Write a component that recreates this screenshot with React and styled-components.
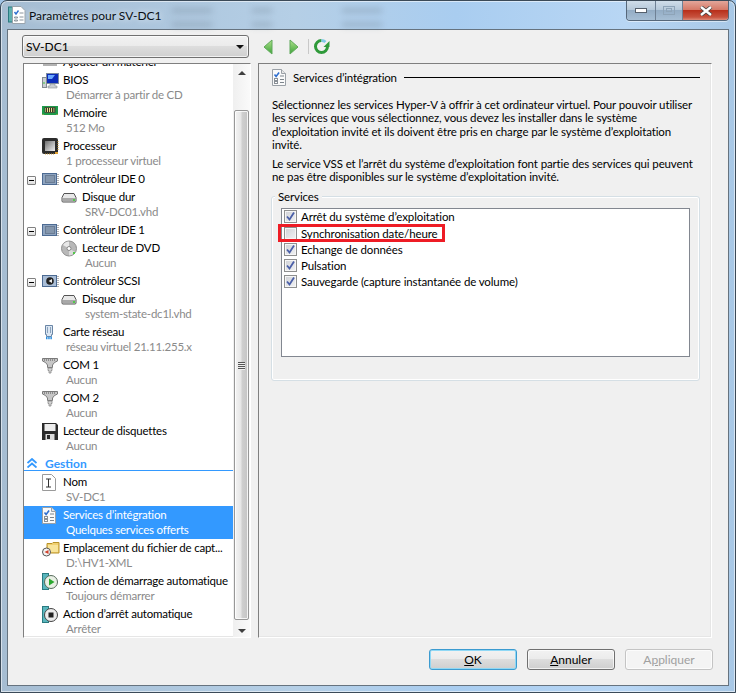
import React from 'react';
import styled, { createGlobalStyle, css } from 'styled-components';

const Global = createGlobalStyle`
  html, body { margin: 0; padding: 0; background: #9fc3e6; }
  * { box-sizing: border-box; }
  body { font-family: "Lato", "Noto Sans", sans-serif; font-size: 11.5px; letter-spacing: -0.12px; color: #000; }
`;

const Frame = styled.div`
  position: relative; width: 736px; height: 693px; overflow: hidden;
  display: flex; flex-direction: column;
  border: 1px solid #3b4a58; border-radius: 7px 7px 0 0;
  padding: 0 6px 6px 6px;
  background: linear-gradient(90deg, #a6bdd2 0%, #a9c2d9 12%, #b5cfe6 40%, #a9cdf0 62%, #b8d6f4 85%, #a8c8e6 100%);
  box-shadow: inset 0 0 0 1px rgba(255,255,255,.55);
`;
const TitleBar = styled.div`
  height: 28px; flex: none; display: flex; align-items: center; gap: 3px; padding-left: 1px;
  position: relative;
`;
const TitleText = styled.span`
  font-size: 12px; letter-spacing: 0; color: #0a0f14; text-shadow: 0 0 6px rgba(255,255,255,.9); position: relative;
`;
const Smudges = styled.div`
  position: absolute; left: 150px; top: 4px; width: 240px; height: 22px; filter: blur(3px); opacity: .45;
  background:
    linear-gradient(#7f93a6,#7f93a6) 15px 3px/40px 5px no-repeat,
    linear-gradient(#7f93a6,#7f93a6) 95px 3px/20px 5px no-repeat,
    linear-gradient(#7f93a6,#7f93a6) 185px 3px/40px 5px no-repeat,
    linear-gradient(#7f93a6,#7f93a6) 15px 17px/40px 5px no-repeat,
    linear-gradient(#7f93a6,#7f93a6) 95px 17px/20px 5px no-repeat,
    linear-gradient(#7f93a6,#7f93a6) 185px 17px/40px 5px no-repeat;
`;
const Caption = styled.div`
  position: absolute; right: 0; top: 0; height: 20px; display: flex;
  border: 1px solid #56677a; border-top: none; border-radius: 0 0 4px 4px; overflow: hidden;
  box-shadow: 0 1px 0 rgba(255,255,255,.5);
`;
const CapBtn = styled.div`
  width: ${p => p.$w}px; display: flex; align-items: center; justify-content: center;
  background: ${p => p.$close
    ? 'linear-gradient(#e3a69a 0%, #d67a68 45%, #b8301c 50%, #c8533f 85%, #dc8a78 100%)'
    : 'linear-gradient(#cfdde9 0%, #b6c9da 45%, #94adc5 50%, #a6bed4 100%)'};
  & + & { border-left: 1px solid #6f8195; }
`;

const Client = styled.div`
  flex: 1; display: flex; flex-direction: column; background: #f0f0f0;
  border: 1px solid #66737f; padding: 5px 16px 0 14px; min-height: 0;
`;
const ToolRow = styled.div`
  display: flex; align-items: center; height: 23px; flex: none;
`;
const Combo = styled.div`
  width: 227px; height: 23px; display: flex; align-items: center; justify-content: space-between;
  font-size: 12px; letter-spacing: 0;
  border: 1px solid #707070; border-radius: 3px; padding: 0 4px 0 3px; margin-right: 14px;
  background: linear-gradient(#f2f2f2 0%, #ebebeb 48%, #dddddd 50%, #cfcfcf 100%);
  box-shadow: inset 0 0 0 1px rgba(255,255,255,.7);
`;
const ArrowDown = styled.span`
  width: 0; height: 0; border-left: 4px solid transparent; border-right: 4px solid transparent; border-top: 4px solid #111;
`;
const NavBtn = styled.span`
  display: inline-flex; width: 26px; margin-right: ${p => p.$mr || 0}px;
`;
const Sep = styled.span` width: 1px; height: 15px; background: #c8c8c8; margin-right: 4px; `;

const Panels = styled.div`
  height: 575px; flex: none; display: flex; margin-top: 5px; gap: 7px;
`;
const etched = css`
  border-style: solid; border-width: 1px;
  border-color: #7f7f7f #ffffff #ffffff #7f7f7f;
  box-shadow: inset -1px -1px 0 #e6e6e6;
`;
const LeftPanel = styled.div`
  ${etched}
  width: 228px; flex: none; display: flex; background: #fff; overflow: hidden; margin-left: 1px;
`;
const TreeList = styled.div`
  flex: 1; min-width: 0; overflow: hidden; letter-spacing: -0.22px;
`;
const Tree = styled.div` margin-top: -11px; `;
const Row = styled.div`
  position: relative;
  display: grid; grid-template-columns: ${p => p.$nest ? 37 : 18}px 17px 1fr;
  height: ${p => p.$single ? 18 : 33}px;
  grid-auto-rows: 15px; padding-top: 1px;
  background: ${p => p.$sel ? '#3399ff' : 'transparent'};
  color: ${p => p.$sel ? '#fff' : '#000'};
`;
const IconCell = styled.span`
  grid-column: 2; grid-row: 1 / span 2; display: block; height: 18px;
`;
const ExpandCell = styled.span`
  grid-column: 1; grid-row: 1; display: flex; align-items: center; padding-left: 3px; height: 16px;
`;
const Plus = styled.span`
  position: relative; width: 9px; height: 9px; display: block; border: 1px solid #808080; border-radius: 1px; margin-top: 2px;
  background: linear-gradient(#fff, #dcdcdc);
  &::after { content: ''; position: absolute; left: 1px; right: 1px; top: 3px; height: 1px; background: #000; }
`;
const Title = styled.div`
  grid-column: 3; grid-row: 1; padding-left: 4px; line-height: 15px; white-space: nowrap;
`;
const Sub = styled.div`
  grid-column: 3; grid-row: 2; padding-left: 7px; line-height: 15px; white-space: nowrap;
  color: ${p => p.$sel ? '#fff' : '#8a8a8a'};
`;
const SectionRow = styled.div`
  height: 18px; display: flex; align-items: center; gap: 8px; padding-left: 3px; position: relative;
  color: #3399ff; font-weight: 700; font-size: 12px; letter-spacing: 0; border-bottom: 2px solid #fff;
  &::after { content: ''; position: absolute; left: 0; right: 0; bottom: 0; height: 1px; background: #3399ff; }
`;

const ScrollBar = styled.div`
  width: 17px; flex: none; display: flex; flex-direction: column; background: linear-gradient(90deg, #f0f0f0, #fafafa);
  border-left: 1px solid #f0f0f0;
`;
const ScrollArrow = styled.div`
  height: 17px; flex: none; display: flex; align-items: center; justify-content: center; margin-top: ${p => p.$top || 0}px;
`;
const ArrowUp = styled.span`
  width: 0; height: 0; border-left: 4px solid transparent; border-right: 4px solid transparent; border-bottom: 4px solid #3f3f3f;
`;
const ArrowDn = styled(ArrowUp)`
  border-bottom: none; border-top: 4px solid #3f3f3f;
`;
const Thumb = styled.div`
  height: 510px; flex: none; margin: 29px 1px 0 0; display: flex; flex-direction: column; align-items: center; justify-content: center; gap: 1px;
  border: 1px solid #979797; border-radius: 2px;
  background: linear-gradient(90deg, #f4f4f4 0%, #e6e6e6 45%, #cfcfcf 55%, #c4c4c4 100%);
  box-shadow: inset 0 0 0 1px rgba(255,255,255,.8);
`;
const Grip = styled.span` width: 7px; height: 1px; background: #555; box-shadow: 0 1px 0 #eee; `;

const RightPanel = styled.div`
  ${etched}
  flex: 1; min-width: 0; padding: 5px 11px 0 13px;
`;
const Heading = styled.div`
  display: flex; align-items: center; height: 17px; letter-spacing: -0.2px;
`;
const HeadingText = styled.span` margin-left: 7px; margin-right: 7px; white-space: nowrap; `;
const Rule = styled.span` flex: 1; height: 1px; background: #000; `;
const Para = styled.p`
  margin: ${p => p.$mt}px 0 0 0; line-height: 13.3px; white-space: nowrap;
`;
const GroupBox = styled.div`
  position: relative; margin: 12px 0 0 -1px; height: 185px; width: 429px;
  border: 1px solid #d5dfe5; border-radius: 3px; padding: 11px 9px 0;
  box-shadow: inset 0 0 0 1px #fff;
`;
const GroupLabel = styled.span`
  position: absolute; left: 3px; top: -9px; padding: 0 3px; background: #f0f0f0; line-height: 17px;
`;
const ListBox = styled.div`
  height: 149px; background: #fff; border: 1px solid #828790;
`;
const ServiceRow = styled.div`
  position: relative; display: flex; align-items: center; height: 16.2px; padding-left: 2px; gap: 4px;
`;
const Box = styled.span`
  width: 13px; height: 13px; flex: none; display: flex; align-items: center; justify-content: center;
  border: 1px solid #8e8f8f;
  background: linear-gradient(135deg, #cfd1d6, #f2f3f5);
  box-shadow: inset 0 0 0 1px #f6f6f6;
`;
const Highlight = styled.span`
  position: absolute; left: -4px; top: -1px; width: 167px; height: 18px; border: 3px solid #ee1c25; pointer-events: none;
`;

const Footer = styled.div`
  flex: 1; display: flex; justify-content: flex-end; align-items: flex-start; padding-top: 11px; gap: 10px; margin-right: -1px;
`;
const Btn = styled.div`
  width: 88px; height: 21px; display: flex; align-items: center; justify-content: center; font-size: 12px; letter-spacing: 0;
  border: 1px solid ${p => p.$disabled ? '#c4c4c4' : p.$def ? '#3c9bd0' : '#707070'}; border-radius: 3px;
  color: ${p => p.$disabled ? '#a0a0a0' : '#000'};
  background: ${p => p.$disabled ? '#f4f4f4' : 'linear-gradient(#f2f2f2 0%, #ebebeb 48%, #dddddd 50%, #cfcfcf 100%)'};
  box-shadow: inset 0 0 0 1px ${p => p.$def ? '#8fd8f5' : 'rgba(255,255,255,.7)'};
  u { text-underline-offset: 1px; }
`;

const IC = ({ children, w = 17, h = 18 }) => <svg width={w} height={h} viewBox={`0 0 ${w} ${h}`} style={{ display: 'block' }}>{children}</svg>;

const AppIcon = () => <svg width="18" height="20" viewBox="0 0 18 20" style={{ display: 'block' }}>
  <rect x="0.5" y="2" width="4" height="15" fill="#5fb0b0" stroke="#2a7a80" />
  <path d="M4.5 1.5H13L17 5.5V18.5H4.5Z" fill="#fff" stroke="#9aa4ac" />
  <path d="M6.5 7l1.5 2 2.5-3.5" stroke="#2f6fd0" strokeWidth="1.4" fill="none" />
  <path d="M11.5 8h4M11.5 12h4M11.5 15h4M6.5 12h3v1h-3zM6.5 15h3v1h-3z" stroke="#8a949c" fill="none" />
</svg>;

const ServicesIcon = () => <svg width="14" height="17" viewBox="0 0 14 17" style={{ display: 'block' }}>
  <path d="M.5.5H9.5L13.5 4.5V16.5H.5Z" fill="#fafafa" stroke="#9aa0a6" />
  <path d="M9.5.5V4.5H13.5" fill="#e6e6e6" stroke="#9aa0a6" />
  <path d="M2.5 5.5l1.6 2 3-4" stroke="#2f6fd0" strokeWidth="1.6" fill="none" />
  <path d="M8 7h4M8 10.5h4M8 13.5h4" stroke="#7d858c" />
  <rect x="2.5" y="9.5" width="3" height="2" fill="#fff" stroke="#8a9096" />
  <rect x="2.5" y="12.5" width="3" height="2" fill="#fff" stroke="#8a9096" />
</svg>;

const Icons = {
  add: <IC><path d="M3 9h10M5 6h6v3H5zM1 11h14" stroke="#666" fill="#aaa" /></IC>,
  bios: <IC w={18}>
    <rect x="4.5" y="1.5" width="12" height="10" fill="#0b2bb8" stroke="#7b8aa0" />
    <path d="M6 3h7l-3 4H6z" fill="#6aa7ff" />
    <rect x="0.5" y="5.5" width="4" height="10" fill="#c9ced2" stroke="#838a90" />
    <rect x="1.5" y="10" width="1" height="2" fill="#42c542" />
    <path d="M8 12h5v2h2v2H6v-2h2z" fill="#c9ced2" stroke="#8a9096" strokeWidth=".6" />
  </IC>,
  mem: <IC w={17}>
    <rect x="0" y="1" width="16" height="9" fill="#1f9a4a" />
    <rect x="3" y="2.5" width="10" height="5" fill="#eadf8a" stroke="#33402c" strokeWidth=".8" />
    <path d="M4.5 3v4M6.5 3v4M8.5 3v4M10.5 3v4M12 3v4" stroke="#1d1d1d" strokeWidth=".9" />
    <path d="M1 10v-1M15 10v-1" stroke="#d6b44a" />
  </IC>,
  cpu: <IC>
    <rect x="0" y="0" width="16" height="16" rx="2" fill="#2c2c2c" />
    <rect x="3" y="3" width="10" height="10" fill="url(#cpug)" />
    <defs><linearGradient id="cpug" x1="0" y1="0" x2="1" y2="1"><stop offset="0" stopColor="#6f6f6f" /><stop offset="1" stopColor="#f0f0f0" /></linearGradient></defs>
    <rect x="13" y="14" width="3" height="2" fill="#e0a030" />
    <path d="M16 3v10" stroke="#c99a3a" strokeDasharray="1 1" />
    <path d="M3 16h10" stroke="#c99a3a" strokeDasharray="1 1" />
  </IC>,
  ctrl: <IC>
    <rect x=".5" y="2.5" width="14" height="11" fill="#8ea4c0" stroke="#4c6a92" />
    <rect x="3.500" y="4.500" width="9" height="7" fill="#8496ac" stroke="#6a7c94" />
    <path d="M16 3v11" stroke="#666" strokeDasharray="1 1" />
  </IC>,
  scsi: <IC>
    <rect x=".5" y="2.5" width="14" height="11" fill="#a9bdd6" stroke="#4c6a92" />
    <circle cx="8" cy="8" r="3.8" fill="#222" />
    <path d="M10 6L6.6 8 10 10z" fill="#eee" />
    <path d="M16 3v11" stroke="#666" strokeDasharray="1 1" />
  </IC>,
  disk: <IC>
    <path d="M3 4.5h10l2 4v3.5a1 1 0 0 1-1 1H2a1 1 0 0 1-1-1V8.500z" fill="#e8e8e8" stroke="#555" />
    <path d="M2 9h12v3H2z" fill="#a8a8a8" />
    <rect x="12" y="10" width="2" height="2" fill="#52c94a" />
  </IC>,
  dvd: <IC>
    <circle cx="8" cy="8.500" r="7.500" fill="#b8b8b8" stroke="#8f8f8f" />
    <path d="M8 8.500L2 5A7 7 0 0 1 8 1.500Z" fill="#e8e8e8" />
    <path d="M8 8.500L14 12A7 7 0 0 1 8 15.500Z" fill="#dcdcdc" />
    <circle cx="8" cy="8.500" r="2" fill="#fff" stroke="#888" />
    <rect x="12" y="12" width="2" height="2" fill="#52c94a" />
  </IC>,
  net: <IC>
    <path d="M3.500 1.500h7v9H9.500v2h-5v-2H3.500z" fill="#dbe6f2" stroke="#6a86a6" />
    <path d="M5.500 3v6M8.500 3v6" stroke="#8aa2bc" />
    <path d="M4 14h6" stroke="#2d8fe0" strokeWidth="2.500" strokeDasharray="1.500 .7" />
  </IC>,
  com: <IC>
    <path d="M.5 1.500h15v2.500l-3 1.500-2 2.500v2.500h-5V8l-2-2.500-3-1.500z" fill="#c6c6c6" stroke="#7a7a7a" />
    <path d="M2 3h12" stroke="#555" strokeDasharray="1 1" />
    <path d="M6 11h4v2.500H9v2.500H7v-2.500H6z" fill="#d4d4d4" stroke="#8a8a8a" strokeWidth=".8" />
  </IC>,
  floppy: <IC>
    <path d="M0 0h14l2 2v15H0z" fill="#2b2b2b" />
    <rect x="2.500" y="1" width="11" height="7" fill="#ededed" />
    <rect x="3.500" y="11" width="9" height="6" fill="#dcdcdc" />
    <rect x="5" y="12" width="3" height="4" fill="#2b2b2b" />
  </IC>,
  name: <IC w={15}>
    <path d="M.5 .5H9.500L13.500 4.500V16.500H.5Z" fill="#fff" stroke="#9a9a9a" />
    <path d="M4 5h5M4 13h5M6.500 5v8" stroke="#333" fill="none" />
  </IC>,
  services: <ServicesIcon />,
  folder: <IC w={18}>
    <path d="M5 3.500h5l1-1h6V13H5z" fill="#f0d070" stroke="#b8922a" />
    <path d="M6 5h10v7H6z" fill="#f8e49a" />
    <circle cx="4.500" cy="12" r="4" fill="#f4f4f4" stroke="#555" />
    <path d="M6.500 10L2.500 12l4 2z" fill="#d0402a" />
  </IC>,
  start: <IC>
    <rect x=".5" y=".5" width="6" height="16" fill="#59b6bd" stroke="#2a7a80" />
    <circle cx="9" cy="9" r="6.500" fill="#e8efe4" stroke="#566b5b" />
    <path d="M7 5.500L12.500 9 7 12.500z" fill="#2aa82f" />
  </IC>,
  stop: <IC>
    <rect x=".5" y=".5" width="6" height="16" fill="#59b6bd" stroke="#2a7a80" />
    <circle cx="9" cy="9" r="6.500" fill="#ececec" stroke="#444" />
    <rect x="6.500" y="6.500" width="5" height="5" fill="#222" />
  </IC>,
};

const Check = () => <svg width="11" height="11" viewBox="0 0 11 11" style={{ display: 'block' }}>
  <path d="M2 5.500l2.500 3 4.500-7" stroke="#4a5fa8" strokeWidth="1.800" fill="none" />
</svg>;

const NavArrow = ({ dir }) => <svg width="10" height="16" viewBox="0 0 10 16" style={{ display: 'block' }}>
  <defs><linearGradient id={`na${dir}`} x1="0" y1="0" x2="0" y2="1"><stop offset="0" stopColor="#aee28a" /><stop offset="1" stopColor="#3da33a" /></linearGradient></defs>
  <path d={dir === 'l' ? 'M9 1V15L1 8Z' : 'M1 1V15L9 8Z'} fill={`url(#na${dir})`} stroke="#5fa85a" />
</svg>;

const Refresh = () => <svg width="17" height="17" viewBox="0 0 17 17" style={{ display: 'block' }}>
  <path d="M8.500 2.500a6 6 0 1 0 6 6" fill="none" stroke="#2f9a3a" strokeWidth="3" />
  <path d="M8.500 2.500a6 6 0 0 1 4 1.500" fill="none" stroke="#7fc9e8" strokeWidth="3" />
  <path d="M16.500 3v6h-6z" fill="#2f9a3a" />
</svg>;

const items = [
  { t: 'Ajouter un matériel', i: 'add', single: true },
  { t: 'BIOS', s: 'Démarrer à partir de CD', i: 'bios' },
  { t: 'Mémoire', s: '512 Mo', i: 'mem' },
  { t: 'Processeur', s: '1 processeur virtuel', i: 'cpu' },
  { t: 'Contrôleur IDE 0', i: 'ctrl', single: true, exp: true },
  { t: 'Disque dur', s: 'SRV-DC01.vhd', i: 'disk', nest: true },
  { t: 'Contrôleur IDE 1', i: 'ctrl', single: true, exp: true },
  { t: 'Lecteur de DVD', s: 'Aucun', i: 'dvd', nest: true },
  { t: 'Contrôleur SCSI', i: 'scsi', single: true, exp: true },
  { t: 'Disque dur', s: 'system-state-dc1l.vhd', i: 'disk', nest: true },
  { t: 'Carte réseau', s: 'réseau virtuel 21.11.255.x', i: 'net' },
  { t: 'COM 1', s: 'Aucun', i: 'com' },
  { t: 'COM 2', s: 'Aucun', i: 'com' },
  { t: 'Lecteur de disquettes', s: 'Aucun', i: 'floppy' },
  { section: 'Gestion' },
  { t: 'Nom', s: 'SV-DC1', i: 'name' },
  { t: 'Services d’intégration', s: 'Quelques services offerts', i: 'services', sel: true },
  { t: 'Emplacement du fichier de capt...', s: 'D:\\HV1-XML', i: 'folder' },
  { t: 'Action de démarrage automatique', s: 'Toujours démarrer', i: 'start' },
  { t: 'Action d’arrêt automatique', s: 'Arrêter', i: 'stop' },
];

const services = [
  ['Arrêt du système d’exploitation', true],
  ['Synchronisation date/heure', false, true],
  ['Echange de données', true],
  ['Pulsation', true],
  ['Sauvegarde (capture instantanée de volume)', true],
];

const Chevrons = () => <svg width="10" height="10" viewBox="0 0 10 10" style={{ display: 'block' }}>
  <path d="M.5 5L5 1l4.500 4M.5 9.500L5 5.500l4.500 4" fill="none" stroke="#3399ff" strokeWidth="1.800" />
</svg>;

export default function App() {
  return (
    <Frame>
      <Global />
      <TitleBar>
        <AppIcon />
        <Smudges />
        <TitleText>Paramètres pour SV-DC1</TitleText>
        <Caption>
          <CapBtn $w={28}><svg width="12" height="5"><rect x=".5" y=".5" width="11" height="4" fill="#fff" stroke="#55606c" /></svg></CapBtn>
          <CapBtn $w={27}><svg width="12" height="9"><rect x=".5" y=".5" width="11" height="8" fill="none" stroke="#8ea4b8" /><rect x="3.500" y="2.500" width="5" height="3" fill="none" stroke="#8ea4b8" /></svg></CapBtn>
          <CapBtn $w={46} $close><svg width="14" height="10"><path d="M2 1l10 8M12 1L2 9" stroke="#444" strokeWidth="4" /><path d="M2 1l10 8M12 1L2 9" stroke="#fff" strokeWidth="2.400" /></svg></CapBtn>
        </Caption>
      </TitleBar>
      <Client>
        <ToolRow>
          <Combo>SV-DC1<ArrowDown /></Combo>
          <NavBtn><NavArrow dir="l" /></NavBtn>
          <NavBtn $mr={-7}><NavArrow dir="r" /></NavBtn>
          <Sep />
          <Refresh />
        </ToolRow>
        <Panels>
          <LeftPanel>
            <TreeList>
              <Tree>
                {items.map((it, idx) => it.section ? (
                  <SectionRow key={idx}><Chevrons />{it.section}</SectionRow>
                ) : (
                  <Row key={idx} $single={it.single} $nest={it.nest} $sel={it.sel}>
                    {it.exp && <ExpandCell><Plus /></ExpandCell>}
                    <IconCell>{Icons[it.i]}</IconCell>
                    <Title>{it.t}</Title>
                    {it.s && <Sub $sel={it.sel}>{it.s}</Sub>}
                  </Row>
                ))}
              </Tree>
            </TreeList>
            <ScrollBar>
              <ScrollArrow><ArrowUp /></ScrollArrow>
              <Thumb>
                <Grip /><Grip /><Grip /><Grip />
              </Thumb>
              <ScrollArrow $top={2}><ArrowDn /></ScrollArrow>
            </ScrollBar>
          </LeftPanel>
          <RightPanel>
            <Heading>
              <ServicesIcon />
              <HeadingText>Services d’intégration</HeadingText>
              <Rule />
            </Heading>
            <Para $mt={12}>Sélectionnez les services Hyper-V à offrir à cet ordinateur virtuel. Pour pouvoir utiliser<br />les services que vous sélectionnez, vous devez les installer dans le système<br />d’exploitation invité et ils doivent être pris en charge par le système d’exploitation<br />invité.</Para>
            <Para $mt={6}>Le service VSS et l’arrêt du système d’exploitation font partie des services qui peuvent<br />ne pas être disponibles sur le système d’exploitation invité.</Para>
            <GroupBox>
              <GroupLabel>Services</GroupLabel>
              <ListBox>
                {services.map(([label, on, hl]) => (
                  <ServiceRow key={label}>
                    <Box>{on && <Check />}</Box>
                    {label}
                    {hl && <Highlight />}
                  </ServiceRow>
                ))}
              </ListBox>
            </GroupBox>
          </RightPanel>
        </Panels>
        <Footer>
          <Btn $def><span><u>O</u>K</span></Btn>
          <Btn><span><u>A</u>nnuler</span></Btn>
          <Btn $disabled><span>A<u>p</u>pliquer</span></Btn>
        </Footer>
      </Client>
    </Frame>
  );
}
